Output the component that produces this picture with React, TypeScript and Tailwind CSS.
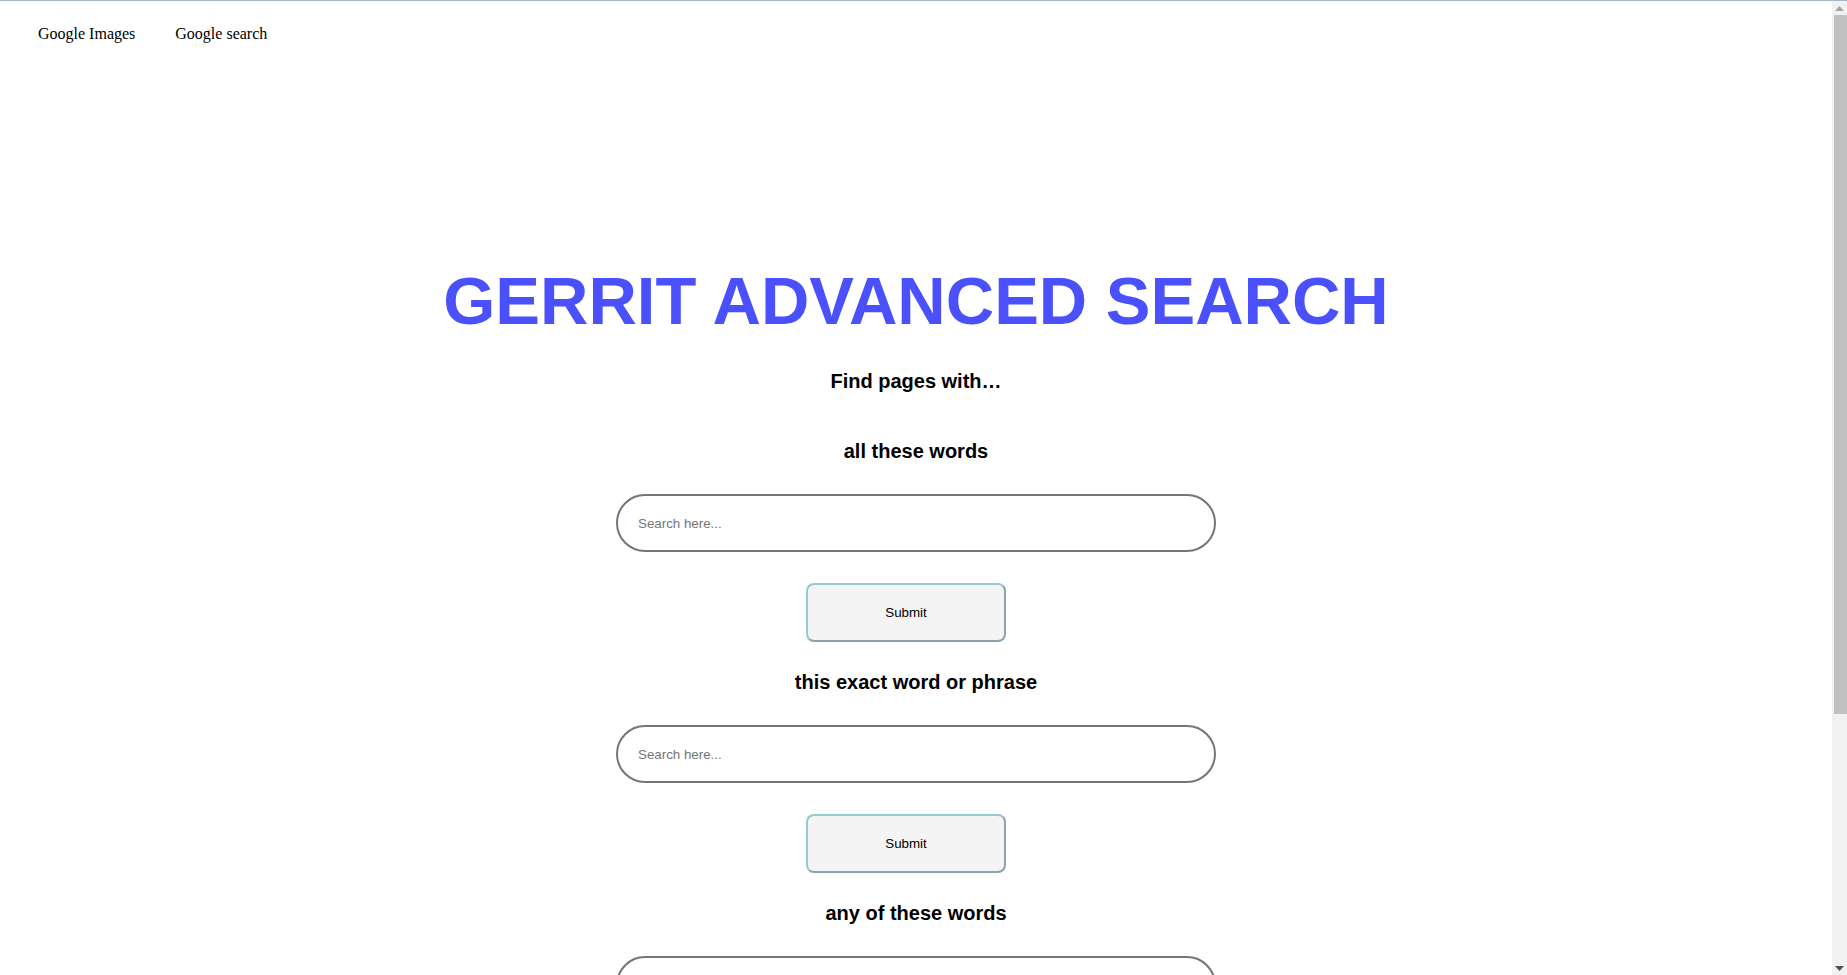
const sections = ["all these words", "this exact word or phrase", "any of these words"]

function SearchBlock({ label }: { label: string }) {
  return (
    <div className="flex flex-col items-center">
      <h3 className="h-[23px] text-[20px] leading-[23px] font-bold text-black">{label}</h3>
      <input
        type="text"
        placeholder="Search here..."
        className="mt-[31px] h-[58px] w-[600px] rounded-full border-2 border-[#767676] bg-white pl-[20px] text-[13.33px] outline-none placeholder:text-[#757575]"
      />
      <button className="mt-[31px] mr-[20px] h-[59px] w-[200px] rounded-[8px] border-2 border-t-[#97c9d2] border-l-[#97c9d2] border-b-[#88a4aa] border-r-[#88a4aa] bg-[#f4f4f4] text-[13.33px] text-black">
        Submit
      </button>
    </div>
  )
}

// browser-style vertical scrollbar drawn at the right edge
function FakeScrollbar() {
  return (
    <div className="fixed top-[1px] right-0 flex h-[calc(100vh-1px)] w-[15px] flex-col bg-[#f1f1f1]">
      <div className="flex h-[14px] items-center justify-center">
        <svg width="9" height="5" viewBox="0 0 9 5">
          <polygon points="4.5,0 9,5 0,5" fill="#a3a3a3" />
        </svg>
      </div>
      <div className="ml-[2px] h-[699px] bg-[#c1c1c1]" />
      <div className="flex-1" />
      <div className="flex h-[14px] items-center justify-center">
        <svg width="9" height="5" viewBox="0 0 9 5">
          <polygon points="0,0 9,0 4.5,5" fill="#505050" />
        </svg>
      </div>
    </div>
  )
}

export default function App() {
  return (
    <div className="min-h-[1318px] border-t border-[#a8b4cc] bg-white pr-[15px] font-['Liberation_Sans',Arial,sans-serif]">
      {/* Top links */}
      <nav className="flex gap-[40px] pl-[38px] pt-[21px] font-['Liberation_Serif','Times_New_Roman',serif] text-[16px] text-black">
        <a href="#">Google Images</a>
        <a href="#">Google search</a>
      </nav>

      <main className="flex flex-col items-center pb-[200px]">
        <h1 className="mt-[217px] text-[67px] leading-[76px] font-bold text-[#4a50fc]">GERRIT ADVANCED SEARCH</h1>
        <h2 className="mt-[31px] text-[20px] leading-[23px] font-bold text-black">Find pages with…</h2>

        <div className="mt-[47px] flex flex-col items-center gap-[29px]">
          {sections.map((s) => (
            <SearchBlock key={s} label={s} />
          ))}
        </div>
      </main>

      <FakeScrollbar />
    </div>
  )
}
